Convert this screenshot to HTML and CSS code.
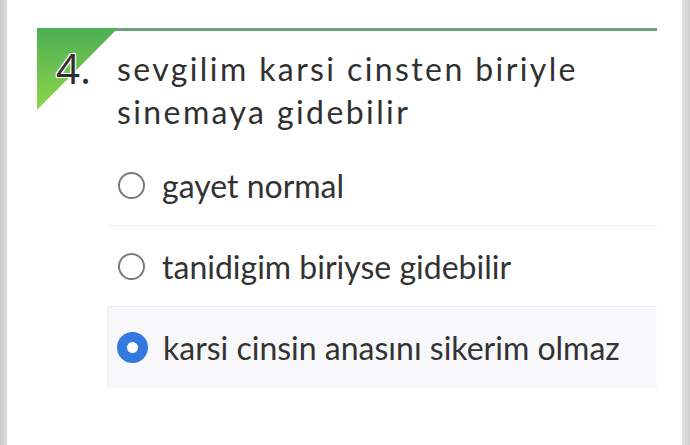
FILE: index.html
```html
<!DOCTYPE html>
<html>
<head>
<meta charset="utf-8">
<link rel="stylesheet" href="styles.css">
</head>
<body>
<div class="page">
  <div class="edge edge-left"></div>
  <div class="card">
    <div class="question">
      <div class="corner"></div>
      <div class="num">4.</div>
      <div class="qtext">sevgilim karsi cinsten biriyle<br>sinemaya gidebilir</div>
    </div>
    <div class="options">
      <div class="opt">
        <span class="radio"></span>
        <span class="label">gayet normal</span>
      </div>
      <div class="opt">
        <span class="radio"></span>
        <span class="label">tanidigim biriyse gidebilir</span>
      </div>
      <div class="opt selected">
        <span class="radio checked"></span>
        <span class="label">karsi cinsin anasını sikerim olmaz</span>
      </div>
    </div>
  </div>
  <div class="edge edge-right"></div>
</div>
</body>
</html>
```
FILE: styles.css
```css
html, body {
  margin: 0;
  padding: 0;
  background: #ffffff;
}
.page {
  display: flex;
  width: 690px;
  height: 445px;
  overflow: hidden;
}
.edge {
  background: linear-gradient(to right, #c9c9c9, #dedede);
}
.edge-left {
  width: 7px;
}
.edge-right {
  width: 8px;
  background: linear-gradient(to right, #e2e2e2, #cfcfcf);
}
.card {
  flex: 1;
  background: #ffffff;
  padding: 28px 25px 0 30px;
  box-sizing: border-box;
}
.question {
  position: relative;
  border-top: 3px solid #6a9f7b;
  padding: 16px 0 0 80px;
  height: 112px;
  box-sizing: border-box;
}
.corner {
  position: absolute;
  left: 0;
  top: -3px;
  width: 81px;
  height: 82px;
  background: linear-gradient(to bottom, #4caf55, #8fd64a);
  clip-path: polygon(0 0, 100% 0, 0 100%);
}
.num {
  position: absolute;
  left: 19px;
  top: 10px;
  font-family: "Open Sans", sans-serif;
  font-size: 42px;
  line-height: 54px;
  color: #2e2e2e;
  text-shadow: 0 0 2px #fff, 1px 1px 0 #fff, -1px -1px 0 #fff, 1px -1px 0 #fff, -1px 1px 0 #fff;
}
.qtext {
  font-family: Lato, sans-serif;
  font-size: 32px;
  line-height: 43px;
  letter-spacing: 2.4px;
  color: #303030;
  white-space: nowrap;
}
.options {
  margin-left: 70px;
  margin-top: 5px;
}
.opt {
  display: flex;
  align-items: center;
  height: 81px;
  padding-left: 11px;
  border-bottom: 1px solid #ececec;
  box-sizing: border-box;
}
.opt.selected {
  background: #f8f8fb;
  border-bottom: none;
  border-left: 1px solid #eeeeee;
  padding-left: 10px;
  height: 81px;
}
.radio {
  width: 27px;
  height: 27px;
  border: 2.5px solid #7a7a7a;
  border-radius: 50%;
  box-sizing: border-box;
  flex: none;
}
.radio.checked {
  border: 10px solid #3479df;
  background: #ffffff;
  width: 31px;
  height: 31px;
  margin-left: -1px;
}
.label {
  margin-left: 17px;
  font-family: Lato, sans-serif;
  font-size: 32px;
  color: #333333;
  white-space: nowrap;
}
.opt.selected .label {
  margin-left: 15px;
}
```
